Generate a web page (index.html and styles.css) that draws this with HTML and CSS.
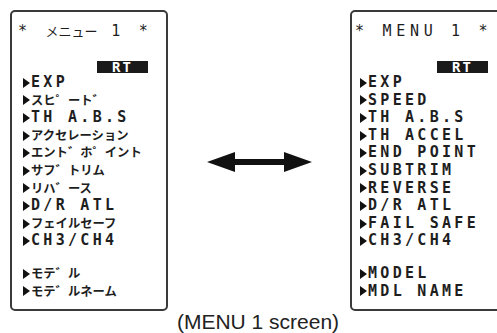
FILE: index.html
```html
<!DOCTYPE html>
<html lang="ja">
<head>
<meta charset="utf-8">
<title>MENU 1 screen</title>
<link rel="stylesheet" href="styles.css">
</head>
<body>
<div class="figure">
  <div class="stage">
    <div class="lcd lcd-ja">
      <div class="title">* <span class="kana">メニュー</span> 1 *</div>
      <div class="rt-row"><span class="rt">RT</span></div>
      <ul class="menu">
        <li><span class="tri"></span>EXP</li>
        <li><span class="tri"></span><span class="kana">スヒ゜ート゛</span></li>
        <li><span class="tri"></span>TH A.B.S</li>
        <li><span class="tri"></span><span class="kana">アクセレーション</span></li>
        <li><span class="tri"></span><span class="kana">エント゛ホ゜イント</span></li>
        <li><span class="tri"></span><span class="kana">サフ゛トリム</span></li>
        <li><span class="tri"></span><span class="kana">リハ゛ース</span></li>
        <li><span class="tri"></span>D/R ATL</li>
        <li><span class="tri"></span><span class="kana">フェイルセーフ</span></li>
        <li><span class="tri"></span>CH3/CH4</li>
        <li class="gap"><span class="tri"></span><span class="kana">モテ゛ル</span></li>
        <li><span class="tri"></span><span class="kana">モテ゛ル</span> <span class="kana">ネーム</span></li>
      </ul>
    </div>
    <div class="arrow">
      <svg width="105" height="20" viewBox="0 0 105 20"><path d="M0 10 L28 0 L28 7 L77 7 L77 0 L105 10 L77 20 L77 13 L28 13 L28 20 Z" fill="#111"/></svg>
    </div>
    <div class="lcd lcd-en">
      <div class="title">* MENU 1 *</div>
      <div class="rt-row"><span class="rt">RT</span></div>
      <ul class="menu">
        <li><span class="tri"></span>EXP</li>
        <li><span class="tri"></span>SPEED</li>
        <li><span class="tri"></span>TH A.B.S</li>
        <li><span class="tri"></span>TH ACCEL</li>
        <li><span class="tri"></span>END POINT</li>
        <li><span class="tri"></span>SUBTRIM</li>
        <li><span class="tri"></span>REVERSE</li>
        <li><span class="tri"></span>D/R ATL</li>
        <li><span class="tri"></span>FAIL SAFE</li>
        <li><span class="tri"></span>CH3/CH4</li>
        <li class="gap"><span class="tri"></span>MODEL</li>
        <li><span class="tri"></span>MDL NAME</li>
      </ul>
    </div>
  </div>
  <div class="caption">(MENU 1 screen)</div>
</div>
</body>
</html>
```

FILE: styles.css
```css
html, body {
  margin: 0;
  padding: 0;
  background: #ffffff;
  overflow: hidden;
}

.figure {
  width: 497px;
  height: 333px;
  overflow: hidden;
}

.stage {
  display: flex;
  align-items: flex-start;
  padding: 10px 0 0 10px;
}

.lcd {
  flex: none;
  box-sizing: border-box;
  width: 158px;
  height: 301px;
  border: 2px solid #3a3a3a;
  border-radius: 5px;
  padding-top: 10px;
  color: #1e1e1e;
  font-family: "DejaVu Sans Mono", "Noto Sans CJK JP", monospace;
  font-weight: bold;
  font-size: 15px;
  letter-spacing: 3.3px;
  white-space: nowrap;
}

.lcd-ja {
  padding-left: 6px;
}

.lcd-en {
  padding-left: 3px;
}

.title {
  height: 18px;
  line-height: 18px;
  letter-spacing: 4.7px;
  font-weight: normal;
}

.kana {
  font-family: "Noto Sans CJK JP", sans-serif;
  font-size: 12.3px;
  font-weight: 700;
  letter-spacing: 0;
}

.title .kana {
  font-size: 13px;
  font-weight: normal;
}

.rt-row {
  display: flex;
  justify-content: flex-end;
  margin-top: 21px;
  padding-right: 18px;
}

.rt {
  display: flex;
  align-items: center;
  justify-content: center;
  width: 51px;
  height: 12px;
  background: #1a1a1a;
  color: #ffffff;
  font-family: "DejaVu Sans Mono", monospace;
  font-weight: bold;
  font-size: 14px;
  letter-spacing: 2px;
  line-height: 12px;
}

.menu {
  list-style: none;
  margin: 1px 0 0 0;
  padding: 0 0 0 5px;
}

.menu li {
  display: flex;
  align-items: center;
  height: 17.6px;
  line-height: 17.6px;
}

.menu li.gap {
  margin-top: 15px;
}

.tri {
  flex: none;
  width: 0;
  height: 0;
  border-left: 7px solid #111;
  border-top: 5px solid transparent;
  border-bottom: 5px solid transparent;
  margin-right: 1px;
}

.arrow {
  flex: none;
  display: flex;
  margin: 142px 38px 0 39px;
}

.arrow svg {
  display: block;
}

.caption {
  padding-left: 19px;
  text-align: center;
  font-family: "Liberation Sans", Arial, sans-serif;
  font-size: 21px;
  line-height: 20px;
  margin-top: 1px;
  color: #222;
}
```
